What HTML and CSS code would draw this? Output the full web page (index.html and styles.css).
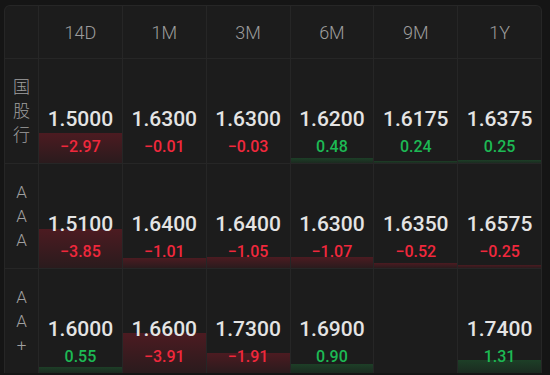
FILE: index.html
```html
<!DOCTYPE html>
<html lang="zh">
<head>
<meta charset="utf-8">
<link rel="stylesheet" href="styles.css">
</head>
<body>
<div class="table">
  <div class="hcell"></div>
  <div class="hcell">14D</div>
  <div class="hcell">1M</div>
  <div class="hcell">3M</div>
  <div class="hcell">6M</div>
  <div class="hcell">9M</div>
  <div class="hcell">1Y</div>

  <div class="label">国股行</div>
  <div class="cell"><div class="bar down" style="height:30.4px"></div><span class="val">1.5000</span><span class="chg down">−2.97</span></div>
  <div class="cell"><div class="bar down" style="height:0.1px"></div><span class="val">1.6300</span><span class="chg down">−0.01</span></div>
  <div class="cell"><div class="bar down" style="height:0.3px"></div><span class="val">1.6300</span><span class="chg down">−0.03</span></div>
  <div class="cell"><div class="bar up" style="height:4.9px"></div><span class="val">1.6200</span><span class="chg up">0.48</span></div>
  <div class="cell"><div class="bar up" style="height:2.5px"></div><span class="val">1.6175</span><span class="chg up">0.24</span></div>
  <div class="cell"><div class="bar up" style="height:2.6px"></div><span class="val">1.6375</span><span class="chg up">0.25</span></div>

  <div class="label">AAA</div>
  <div class="cell"><div class="bar down" style="height:39.5px"></div><span class="val">1.5100</span><span class="chg down">−3.85</span></div>
  <div class="cell"><div class="bar down" style="height:10.3px"></div><span class="val">1.6400</span><span class="chg down">−1.01</span></div>
  <div class="cell"><div class="bar down" style="height:10.8px"></div><span class="val">1.6400</span><span class="chg down">−1.05</span></div>
  <div class="cell"><div class="bar down" style="height:11px"></div><span class="val">1.6300</span><span class="chg down">−1.07</span></div>
  <div class="cell"><div class="bar down" style="height:5.3px"></div><span class="val">1.6350</span><span class="chg down">−0.52</span></div>
  <div class="cell"><div class="bar down" style="height:2.6px"></div><span class="val">1.6575</span><span class="chg down">−0.25</span></div>

  <div class="label">AA+</div>
  <div class="cell"><div class="bar up" style="height:5.6px"></div><span class="val">1.6000</span><span class="chg up">0.55</span></div>
  <div class="cell"><div class="bar down" style="height:40.1px"></div><span class="val">1.6600</span><span class="chg down">−3.91</span></div>
  <div class="cell"><div class="bar down" style="height:19.6px"></div><span class="val">1.7300</span><span class="chg down">−1.91</span></div>
  <div class="cell"><div class="bar up" style="height:9.2px"></div><span class="val">1.6900</span><span class="chg up">0.90</span></div>
  <div class="cell"></div>
  <div class="cell"><div class="bar up" style="height:13.4px"></div><span class="val">1.7400</span><span class="chg up">1.31</span></div>
</div>
</body>
</html>
```

FILE: styles.css
```css
html, body {
  margin: 0;
  padding: 0;
  background: #151515;
}

body {
  font-family: Roboto, "Noto Sans", "Noto Sans CJK SC", sans-serif;
  overflow: hidden;
}

.table {
  margin: 5px 0 0 4px;
  width: 538px;
  box-sizing: border-box;
  border: 1px solid #262626;
  border-bottom: none;
  border-radius: 6px 6px 0 0;
  overflow: hidden;
  display: grid;
  grid-template-columns: 33px repeat(6, 1fr);
  grid-template-rows: 52px repeat(3, 104px);
  gap: 1px;
  background: #262626;
}

.hcell {
  background: #1c1c1c;
  color: #9d9d9d;
  font-size: 18px;
  font-weight: 300;
  display: flex;
  align-items: center;
  justify-content: center;
  padding-top: 1px;
  box-sizing: border-box;
}

.label {
  background: #1c1c1c;
  color: #a0a0a0;
  font-family: Roboto, "Noto Sans CJK SC", sans-serif;
  font-size: 17px;
  font-weight: 300;
  line-height: 24px;
  padding: 0 7px;
  text-align: center;
  word-break: break-all;
  display: flex;
  align-items: center;
  justify-content: center;
}

.cell {
  position: relative;
  background: #1c1c1c;
  display: flex;
  flex-direction: column;
  justify-content: flex-end;
  align-items: center;
  padding-bottom: 6px;
  box-sizing: border-box;
}

.bar {
  position: absolute;
  left: 0;
  right: 0;
  bottom: 0;
}

.bar.down {
  background: linear-gradient(to bottom, #4c1b21, #2a1b1d);
}

.bar.up {
  background: linear-gradient(to bottom, #1d3f27, #1b2a20);
}

.val {
  position: relative;
  color: #e4e4e4;
  font-size: 21px;
  font-weight: 500;
  line-height: 24px;
  margin-bottom: 6px;
}

.chg {
  position: relative;
  font-size: 16px;
  font-weight: 500;
  line-height: 20px;
}

.chg.down {
  color: #f0283c;
}

.chg.up {
  color: #1db954;
}
```
